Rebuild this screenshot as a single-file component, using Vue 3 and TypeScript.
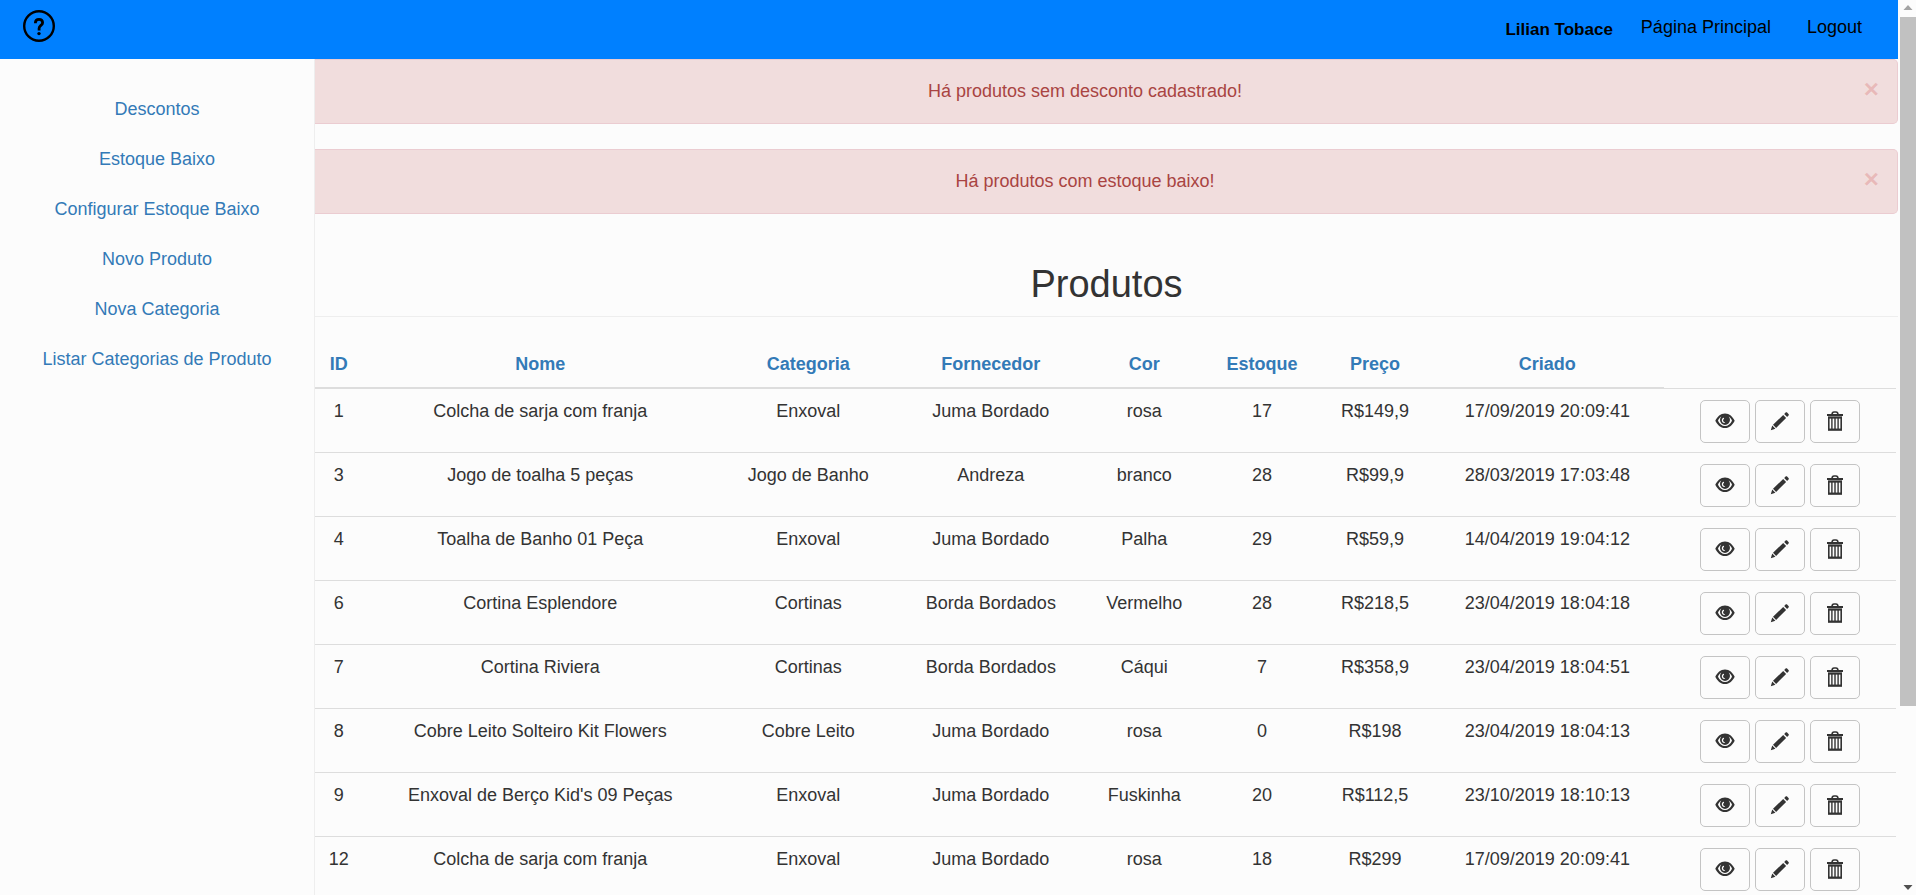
<script setup lang="ts">
import { ref } from 'vue'

interface Product {
  id: number
  name: string
  category: string
  supplier: string
  color: string
  stock: number
  price: string
  created: string
}

const menu: string[] = [
  'Descontos',
  'Estoque Baixo',
  'Configurar Estoque Baixo',
  'Novo Produto',
  'Nova Categoria',
  'Listar Categorias de Produto',
]

const alerts = ref<string[]>([
  'Há produtos sem desconto cadastrado!',
  'Há produtos com estoque baixo!',
])

const columns: string[] = ['ID', 'Nome', 'Categoria', 'Fornecedor', 'Cor', 'Estoque', 'Preço', 'Criado']

const products: Product[] = [
  { id: 1, name: 'Colcha de sarja com franja', category: 'Enxoval', supplier: 'Juma Bordado', color: 'rosa', stock: 17, price: 'R$149,9', created: '17/09/2019 20:09:41' },
  { id: 3, name: 'Jogo de toalha 5 peças', category: 'Jogo de Banho', supplier: 'Andreza', color: 'branco', stock: 28, price: 'R$99,9', created: '28/03/2019 17:03:48' },
  { id: 4, name: 'Toalha de Banho 01 Peça', category: 'Enxoval', supplier: 'Juma Bordado', color: 'Palha', stock: 29, price: 'R$59,9', created: '14/04/2019 19:04:12' },
  { id: 6, name: 'Cortina Esplendore', category: 'Cortinas', supplier: 'Borda Bordados', color: 'Vermelho', stock: 28, price: 'R$218,5', created: '23/04/2019 18:04:18' },
  { id: 7, name: 'Cortina Riviera', category: 'Cortinas', supplier: 'Borda Bordados', color: 'Cáqui', stock: 7, price: 'R$358,9', created: '23/04/2019 18:04:51' },
  { id: 8, name: 'Cobre Leito Solteiro Kit Flowers', category: 'Cobre Leito', supplier: 'Juma Bordado', color: 'rosa', stock: 0, price: 'R$198', created: '23/04/2019 18:04:13' },
  { id: 9, name: "Enxoval de Berço Kid's 09 Peças", category: 'Enxoval', supplier: 'Juma Bordado', color: 'Fuskinha', stock: 20, price: 'R$112,5', created: '23/10/2019 18:10:13' },
  { id: 12, name: 'Colcha de sarja com franja', category: 'Enxoval', supplier: 'Juma Bordado', color: 'rosa', stock: 18, price: 'R$299', created: '17/09/2019 20:09:41' },
]

function dismiss(index: number): void {
  alerts.value.splice(index, 1)
}
</script>

<template>
  <div class="window">
    <div class="page">
      <header class="topbar">
        <a href="#" class="help" aria-label="Ajuda">
          <svg viewBox="0 0 32 32" width="32" height="32" fill="none" stroke="#000">
            <circle cx="16" cy="16" r="14.800" stroke-width="2.400" />
            <path d="M12.400 13.200v-.4c0-2 1.500-3.400 3.600-3.400s3.600 1.400 3.600 3.300c0 2.600-3.500 2.900-3.500 5.600v2.200" stroke-width="2.800" />
            <circle cx="16" cy="23.600" r="1.700" fill="#000" stroke="none" />
          </svg>
        </a>
        <nav class="account">
          <strong class="user">Lilian Tobace</strong>
          <a href="#">Página Principal</a>
          <a href="#">Logout</a>
        </nav>
      </header>

      <div class="body">
        <nav class="sidebar">
          <a v-for="item in menu" :key="item" href="#">{{ item }}</a>
        </nav>

        <main class="content">
          <div v-for="(text, i) in alerts" :key="text" class="alert" role="alert">
            <span class="alert-text">{{ text }}</span>
            <button type="button" class="close" aria-label="Fechar" @click="dismiss(i)">×</button>
          </div>

          <h1>Produtos</h1>

          <table>
            <colgroup>
              <col class="c-id" />
              <col class="c-name" />
              <col class="c-category" />
              <col class="c-supplier" />
              <col class="c-color" />
              <col class="c-stock" />
              <col class="c-price" />
              <col class="c-date" />
              <col class="c-date" />
            </colgroup>
            <thead>
              <tr>
                <th v-for="column in columns" :key="column" scope="col"><a href="#">{{ column }}</a></th>
                <td></td>
              </tr>
            </thead>
            <tbody>
              <tr v-for="p in products" :key="p.id">
                <td>{{ p.id }}</td>
                <td>{{ p.name }}</td>
                <td>{{ p.category }}</td>
                <td>{{ p.supplier }}</td>
                <td>{{ p.color }}</td>
                <td>{{ p.stock }}</td>
                <td>{{ p.price }}</td>
                <td>{{ p.created }}</td>
                <td class="tools">
                  <div class="actions">
                    <button type="button" aria-label="Visualizar">
                      <svg viewBox="0 0 20 20" width="20" height="20">
                        <path fill="#333" fill-rule="evenodd" d="M10 2.500C5.500 2.500 2.300 5.700.3 9.700c2 4 5.200 7.300 9.700 7.300s7.700-3.300 9.700-7.300C17.700 5.700 14.500 2.500 10 2.500zM10 15c-3.200 0-5.400-2.200-7-5.300.8-1.700 1.900-3.200 3.300-4.100a5 5 0 1 0 7.400 0c1.400.9 2.500 2.400 3.300 4.100-1.600 3.100-3.800 5.300-7 5.300zM8.600 6.700c.7.400.6 1.200-.1 1.600-.5.500-.6 1.400 0 2.100.5.600 1.300.8 1.800 1.300-1.700.8-3.500-.4-3.500-2.400 0-1.300.7-2.400 1.800-2.600z" />
                      </svg>
                    </button>
                    <button type="button" aria-label="Editar">
                      <svg viewBox="0 0 20 20" width="20" height="20" fill="#333">
                        <path d="M.8 19.200l1.400-4.600 3.200 3.200zM3 13.800L13.200 4l2.900 2.900L6.100 17zM14.200 3l1.400-1.400c.5-.5 1-.5 1.500 0l1.400 1.400c.5.500.5 1 0 1.500L17.100 5.900z" />
                      </svg>
                    </button>
                    <button type="button" aria-label="Excluir">
                      <svg viewBox="0 0 18 20" width="18" height="20" fill="none" stroke="#333">
                        <path d="M1 4h16" stroke-width="2" />
                        <path d="M6 3.500Q6.200 1 8 1h2Q11.800 1 12 3.500" stroke-width="1.600" />
                        <path d="M2.800 6.500h12.400v12H2.800z" stroke-width="1.600" />
                        <path d="M2 6.500h14M2 18.700h14" stroke-width="2" />
                        <path d="M5.900 7v11M9 7v11M12.100 7v11" stroke-width="1.400" />
                      </svg>
                    </button>
                  </div>
                </td>
              </tr>
            </tbody>
          </table>
        </main>
      </div>
    </div>

    <div class="scrollbar" aria-hidden="true">
      <svg viewBox="0 0 16 17" width="16" height="17"><path d="M3.500 10L8 5l4.500 5z" fill="#a3a3a3" /></svg>
      <div class="track"><div class="thumb"></div></div>
      <svg viewBox="0 0 16 17" width="16" height="17"><path d="M3.500 7L8 12l4.500-5z" fill="#505050" /></svg>
    </div>
  </div>
</template>

<style>
body {
  margin: 0;
  background: #fcfcfc;
}
</style>

<style scoped>
.window {
  display: flex;
  height: 100vh;
  overflow: hidden;
  background: #fcfcfc;
  color: #333;
  font-family: "Liberation Sans", Arial, sans-serif;
  font-size: 18px;
  line-height: 25px;
}
.window *,
.window {
  box-sizing: border-box;
}
a {
  color: #337ab7;
  text-decoration: none;
}
svg {
  display: block;
}
.page {
  flex: 1;
  min-width: 0;
  display: flex;
  flex-direction: column;
}
.topbar {
  flex: none;
  display: flex;
  justify-content: space-between;
  align-items: flex-start;
  height: 59px;
  padding: 10px 36px 0 23px;
  background: #0080ff;
}
.account {
  display: flex;
  align-items: flex-start;
  padding-top: 5px;
}
.account a {
  color: #000;
}
.account a + a {
  margin-left: 36px;
}
.user {
  margin-right: 28px;
  padding-top: 2px;
  color: #000;
  font-size: 17px;
}
.body {
  flex: 1;
  min-height: 0;
  display: flex;
}
.sidebar {
  flex: none;
  display: flex;
  flex-direction: column;
  gap: 25px;
  width: 315px;
  padding-top: 38px;
  border-right: 1px solid #eee;
  text-align: center;
}
.content {
  flex: 1;
  min-width: 0;
}
.alert {
  display: flex;
  align-items: flex-start;
  height: 65px;
  margin-bottom: 25px;
  padding: 19px 18px 0 20px;
  border: 1px solid #ebccd1;
  border-left: 0;
  border-radius: 0 5px 5px 0;
  background: #f1dddd;
  color: #a94442;
}
.alert-text {
  flex: 1;
  text-align: center;
}
.close {
  width: 44px;
  padding: 0;
  border: 0;
  background: none;
  color: #c9302c;
  font: bold 26px/20px "Liberation Sans", Arial, sans-serif;
  text-align: right;
  text-shadow: 0 1px 0 #fff;
  opacity: 0.2;
  cursor: pointer;
}
h1 {
  margin: 49px 0 25px;
  padding-bottom: 11px;
  border-bottom: 1px solid #eee;
  font-size: 38px;
  font-weight: 400;
  line-height: 42px;
  text-align: center;
}
table {
  width: calc(100% - 2px);
  table-layout: fixed;
  border-collapse: collapse;
  text-align: center;
}
.c-id { width: 3%; }
.c-name { width: 22.5%; }
.c-category { width: 11.4%; }
.c-supplier { width: 11.7%; }
.c-color { width: 7.7%; }
.c-stock { width: 7.2%; }
.c-price { width: 7.1%; }
.c-date { width: 14.7%; }
th,
td {
  padding: 10px 0;
  vertical-align: top;
}
th {
  border-bottom: 2px solid #ddd;
}
tbody td {
  border-top: 1px solid #ddd;
}
tbody .tools {
  padding: 11px 0 9px;
}
.actions {
  display: flex;
  justify-content: center;
  gap: 5px;
}
.actions button {
  display: flex;
  align-items: center;
  justify-content: center;
  width: 50px;
  height: 43px;
  padding: 0;
  border: 1px solid #c4c4c4;
  border-radius: 5px;
  background: #fcfcfc;
  cursor: pointer;
}
.scrollbar {
  flex: none;
  display: flex;
  flex-direction: column;
  width: 18px;
  padding-left: 2px;
}
.track {
  flex: 1;
}
.thumb {
  height: 80%;
  background: #c1c1c1;
}
</style>
